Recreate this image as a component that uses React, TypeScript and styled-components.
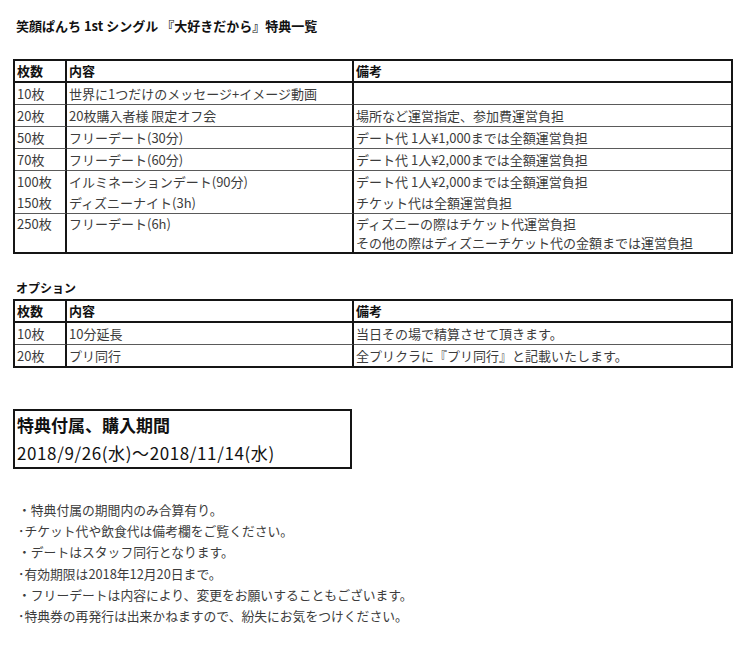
import React from "react";
import styled, { createGlobalStyle } from "styled-components";

const GlobalStyle = createGlobalStyle`
  html, body {
    margin: 0;
    padding: 0;
    background: #ffffff;
  }
  body {
    font-family: "Noto Sans CJK JP", "Noto Sans", sans-serif;
    color: #3c3c3c;
  }
`;

const Page = styled.div`
  width: 750px;
  padding: 17px 0 0 13px;
  box-sizing: border-box;
`;

const Title = styled.h1`
  margin: 0 0 0 3px;
  font-size: 13px;
  line-height: 18px;
  font-weight: 700;
  color: #111;
`;

const SectionTitle = styled.h2`
  margin: 25px 0 2px 3px;
  font-size: 12px;
  line-height: 18px;
  font-weight: 700;
  color: #111;
`;

const Table = styled.table<{ $top?: number }>`
  margin-top: ${(p) => p.$top ?? 0}px;
  width: 720px;
  border: 2px solid #151515;
  border-spacing: 0;
  border-collapse: separate;
  table-layout: fixed;
  font-size: 13px;
`;

const HeadCell = styled.th`
  text-align: left;
  font-weight: 700;
  color: #111;
  padding: 0 2px;
  line-height: 20px;
  border-bottom: 2px solid #151515;
  &:not(:last-child) {
    border-right: 2px solid #151515;
  }
`;

const Cell = styled.td<{ $tight?: boolean }>`
  vertical-align: top;
  padding: 0 2px;
  line-height: ${(p) => (p.$tight ? 19 : 21)}px;
  color: #3c3c3c;
  white-space: nowrap;
  border-bottom: 1px solid #5a5a5a;
  &:not(:last-child) {
    border-right: 2px solid #151515;
  }
  tr:last-child > & {
    border-bottom: none;
  }
`;

const Line = styled.div``;

const PeriodBox = styled.div`
  margin-top: 41px;
  width: 339px;
  box-sizing: border-box;
  border: 2px solid #151515;
  padding: 0 2px;
  font-size: 17px;
  line-height: 28px;
  color: #111;
`;

const PeriodLabel = styled.div`
  font-weight: 700;
`;

const PeriodDates = styled.div`
  letter-spacing: 0.6px;
`;

const Notes = styled.ul`
  list-style: none;
  margin: 30px 0 0 0;
  padding: 0 0 0 5px;
  font-size: 12.8px;
  line-height: 21.2px;
  color: #3c3c3c;
`;

type Row = { count: string[]; content: string[]; note: string[]; tight?: boolean };

const mainRows: Row[] = [
  { count: ["10枚"], content: ["世界に1つだけのメッセージ+イメージ動画"], note: [""] },
  { count: ["20枚"], content: ["20枚購入者様 限定オフ会"], note: ["場所など運営指定、参加費運営負担"] },
  { count: ["50枚"], content: ["フリーデート(30分)"], note: ["デート代 1人¥1,000までは全額運営負担"] },
  { count: ["70枚"], content: ["フリーデート(60分)"], note: ["デート代 1人¥2,000までは全額運営負担"] },
  {
    count: ["100枚", "150枚"],
    content: ["イルミネーションデート(90分)", "ディズニーナイト(3h)"],
    note: ["デート代 1人¥2,000までは全額運営負担", "チケット代は全額運営負担"],
  },
  {
    count: ["250枚"],
    content: ["フリーデート(6h)"],
    note: ["ディズニーの際はチケット代運営負担", "その他の際はディズニーチケット代の金額までは運営負担"],
    tight: true,
  },
];

const optionRows: Row[] = [
  { count: ["10枚"], content: ["10分延長"], note: ["当日その場で精算させて頂きます。"] },
  { count: ["20枚"], content: ["プリ同行"], note: ["全プリクラに『プリ同行』と記載いたします。"] },
];

const notes = [
  "・特典付属の期間内のみ合算有り。",
  "･チケット代や飲食代は備考欄をご覧ください。",
  "・デートはスタッフ同行となります。",
  "･有効期限は2018年12月20日まで。",
  "・フリーデートは内容により、変更をお願いすることもございます。",
  "･特典券の再発行は出来かねますので、紛失にお気をつけください。",
];

const Lines = ({ items }: { items: string[] }) => (
  <>
    {items.map((t, i) => (
      <Line key={i}>{t || "\u00a0"}</Line>
    ))}
  </>
);

const BenefitTable = ({ rows, top }: { rows: Row[]; top?: number }) => (
  <Table $top={top}>
    <colgroup>
      <col style={{ width: 52 }} />
      <col style={{ width: 287 }} />
      <col />
    </colgroup>
    <thead>
      <tr>
        <HeadCell>枚数</HeadCell>
        <HeadCell>内容</HeadCell>
        <HeadCell>備考</HeadCell>
      </tr>
    </thead>
    <tbody>
      {rows.map((r, i) => (
        <tr key={i}>
          <Cell $tight={r.tight}>
            <Lines items={r.count} />
          </Cell>
          <Cell $tight={r.tight}>
            <Lines items={r.content} />
          </Cell>
          <Cell $tight={r.tight}>
            <Lines items={r.note} />
          </Cell>
        </tr>
      ))}
    </tbody>
  </Table>
);

export default function App() {
  return (
    <Page>
      <GlobalStyle />
      <Title>笑顔ぱんち 1st シングル 『大好きだから』特典一覧</Title>
      <BenefitTable rows={mainRows} top={24} />

      <SectionTitle>オプション</SectionTitle>
      <BenefitTable rows={optionRows} />

      <PeriodBox>
        <PeriodLabel>特典付属、購入期間</PeriodLabel>
        <PeriodDates>2018/9/26(水)〜2018/11/14(水)</PeriodDates>
      </PeriodBox>

      <Notes>
        {notes.map((n, i) => (
          <li key={i}>{n}</li>
        ))}
      </Notes>
    </Page>
  );
}
